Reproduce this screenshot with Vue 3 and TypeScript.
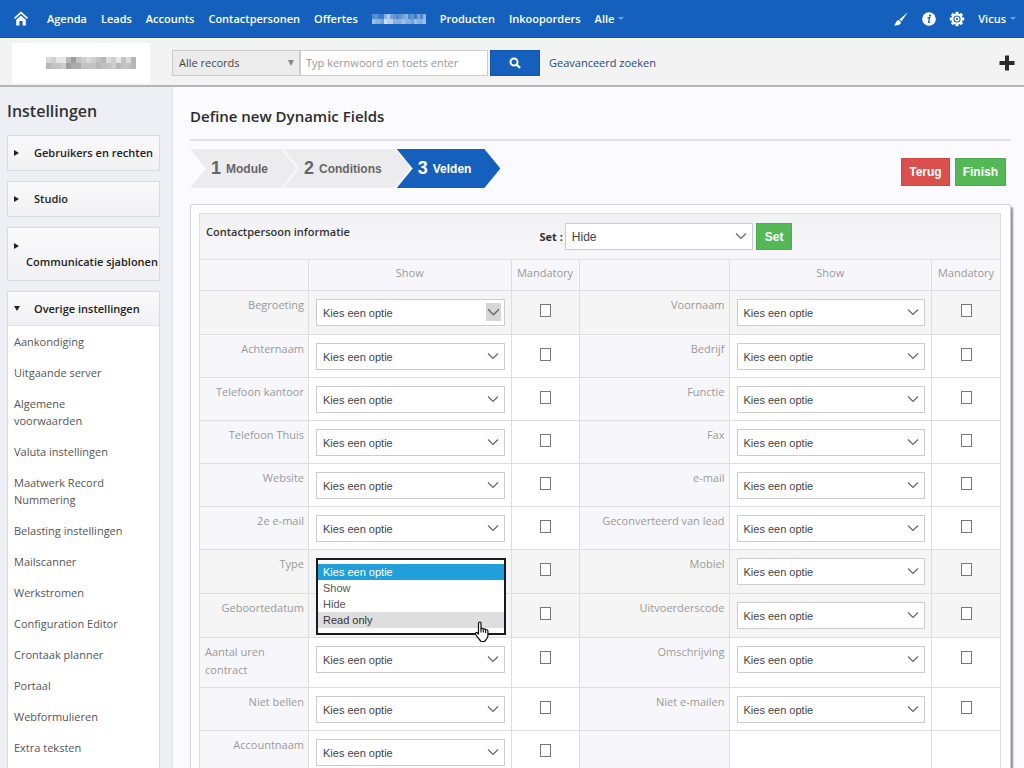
<script setup lang="ts">
import { ref } from 'vue'

interface Field {
  label: string
  focused?: boolean
  open?: boolean
}
interface Row {
  left: Field
  right?: Field
  shaded?: boolean
}

const modules: string[] = ['Agenda', 'Leads', 'Accounts', 'Contactpersonen', 'Offertes']
const moreModules: string[] = ['Producten', 'Inkooporders']

const closedGroups = ['Gebruikers en rechten', 'Studio', 'Communicatie sjablonen']
const settings: string[] = [
  'Aankondiging',
  'Uitgaande server',
  'Algemene voorwaarden',
  'Valuta instellingen',
  'Maatwerk Record Nummering',
  'Belasting instellingen',
  'Mailscanner',
  'Werkstromen',
  'Configuration Editor',
  'Crontaak planner',
  'Portaal',
  'Webformulieren',
  'Extra teksten',
]

const steps = [
  { n: 1, label: 'Module' },
  { n: 2, label: 'Conditions' },
  { n: 3, label: 'Velden' },
]
const currentStep = ref(3)

const options = ['Kies een optie', 'Show', 'Hide', 'Read only']

const rows: Row[] = [
  { left: { label: 'Begroeting', focused: true }, right: { label: 'Voornaam' }, shaded: true },
  { left: { label: 'Achternaam' }, right: { label: 'Bedrijf' } },
  { left: { label: 'Telefoon kantoor' }, right: { label: 'Functie' } },
  { left: { label: 'Telefoon Thuis' }, right: { label: 'Fax' } },
  { left: { label: 'Website' }, right: { label: 'e-mail' } },
  { left: { label: '2e e-mail' }, right: { label: 'Geconverteerd van lead' } },
  { left: { label: 'Type', open: true }, right: { label: 'Mobiel' }, shaded: true },
  { left: { label: 'Geboortedatum' }, right: { label: 'Uitvoerderscode' }, shaded: true },
  { left: { label: 'Aantal uren contract' }, right: { label: 'Omschrijving' } },
  { left: { label: 'Niet bellen' }, right: { label: 'Niet e-mailen' } },
  { left: { label: 'Accountnaam' } },
]

const fieldsOf = (row: Row): (Field | undefined)[] => [row.left, row.right]

const mosaic = [3, 4, 2, 2, 6, 8, 5, 4, 3, 4, 5, 6, 3, 4, 2, 5, 3, 6]
const mosaicLow = [6, 5, 5, 4, 8, 7, 7, 5, 5, 5, 6, 5, 5, 4, 6, 5, 5, 6]
</script>

<template>
  <div class="page">
    <nav class="topbar">
      <a href="#" class="home" aria-label="Home">
        <svg width="16" height="16" viewBox="0 0 16 16">
          <path d="M1.500 7.400 L8 1.600 L14.500 7.400" fill="none" stroke="#fff" stroke-width="1.600" />
          <path d="M3.200 8.800 L8 4.600 L12.800 8.800 V14.500 H9.600 V10 H6.400 V14.500 H3.200 Z" fill="#fff" />
        </svg>
      </a>
      <a v-for="m in modules" :key="m" href="#">{{ m }}</a>
      <svg class="masked" width="54" height="10" viewBox="0 0 54 10" shape-rendering="crispEdges">
        <rect v-for="(v, i) in mosaic" :key="i" :x="i * 3" y="0" width="3" height="5" fill="#fff" :opacity="v / 12" />
        <rect v-for="(v, i) in mosaicLow" :key="'l' + i" :x="i * 3" y="5" width="3" height="5" fill="#fff" :opacity="v / 10" />
      </svg>
      <a v-for="m in moreModules" :key="m" href="#">{{ m }}</a>
      <a href="#" class="drop">Alle <i class="caret"></i></a>
      <div class="tools">
        <a href="#" aria-label="Opmaak">
          <svg width="16" height="16" viewBox="0 0 16 16">
            <path d="M15 1 L8.500 10.200 L6.400 8.400 Z" fill="#fff" />
            <path d="M5.600 9 L8 11.200 C7.600 14 4.500 14.800 1 14.400 C2.800 13.400 2.600 9.800 5.600 9 Z" fill="#fff" />
          </svg>
        </a>
        <a href="#" aria-label="Informatie">
          <svg width="14" height="14" viewBox="0 0 14 14">
            <circle cx="7" cy="7" r="6.800" fill="#fff" />
            <circle cx="8" cy="3.600" r="1.100" fill="#1560bd" />
            <path d="M5.400 6.200 L7.700 5.600 L6.600 10 Q6.500 10.800 8.200 10" fill="none" stroke="#1560bd" stroke-width="1.300" />
          </svg>
        </a>
        <a href="#" aria-label="Instellingen">
          <svg width="16" height="16" viewBox="0 0 16 16">
            <g fill="#fff">
              <rect v-for="a in [0, 45, 90, 135]" :key="a" x="6.500" y="0.800" width="3" height="14.400" :transform="`rotate(${a} 8 8)`" />
            </g>
            <circle cx="8" cy="8" r="4.600" fill="#1560bd" stroke="#fff" stroke-width="2" />
            <circle cx="8" cy="8" r="1.800" fill="none" stroke="#fff" stroke-width="1.400" />
          </svg>
        </a>
        <a href="#" class="drop">Vicus <i class="caret"></i></a>
      </div>
    </nav>

    <header class="searchbar">
      <div class="logo">
        <svg width="90" height="12" viewBox="0 0 90 12" shape-rendering="crispEdges">
          <rect v-for="(v, i) in mosaic" :key="i" :x="i * 5" y="0" width="5" height="6" fill="#555" :opacity="v / 14" />
          <rect v-for="(v, i) in mosaicLow" :key="'l' + i" :x="i * 5" y="6" width="5" height="6" fill="#555" :opacity="v / 14" />
        </svg>
      </div>
      <form class="search" @submit.prevent>
        <span class="pick scope">
          <select aria-label="Zoekbereik"><option>Alle records</option></select>
          <svg class="tri" width="6" height="6" viewBox="0 0 6 6"><path d="M0 0 H6 L3 6 Z" fill="#888" /></svg>
        </span>
        <input type="text" class="term" aria-label="Zoekterm" placeholder="Typ kernwoord en toets enter" />
        <button type="submit" class="go" aria-label="Zoeken">
          <svg width="12" height="12" viewBox="0 0 12 12">
            <circle cx="5" cy="5" r="3.500" fill="none" stroke="#fff" stroke-width="2" />
            <path d="M7.500 7.500 L11 11" stroke="#fff" stroke-width="2.400" />
          </svg>
        </button>
      </form>
      <a href="#" class="advanced">Geavanceerd zoeken</a>
      <button type="button" class="add" aria-label="Toevoegen">
        <svg width="16" height="16" viewBox="0 0 16 16"><path d="M8 0.500 V15.500 M0.500 8 H15.500" stroke="#2b2b2f" stroke-width="4" /></svg>
      </button>
    </header>

    <div class="body">
      <aside class="side">
        <h2>Instellingen</h2>
        <div v-for="g in closedGroups" :key="g" class="group">
          <button type="button" class="group-head" :class="{ tall: g.startsWith('Comm') }" aria-expanded="false">
            <span class="arrow right"></span><span class="name">{{ g }}</span>
          </button>
        </div>
        <div class="group">
          <button type="button" class="group-head open" aria-expanded="true">
            <span class="arrow down"></span><span class="name">Overige instellingen</span>
          </button>
          <ul class="links">
            <li v-for="s in settings" :key="s"><a href="#">{{ s }}</a></li>
          </ul>
        </div>
      </aside>

      <main class="main">
        <h1>Define new Dynamic Fields</h1>
        <div class="toolbar">
          <ol class="steps">
            <li v-for="s in steps" :key="s.n" :class="{ active: s.n === currentStep }">
              <b>{{ s.n }}</b><span>{{ s.label }}</span>
            </li>
          </ol>
          <div class="actions">
            <button type="button" class="btn red">Terug</button>
            <button type="button" class="btn green">Finish</button>
          </div>
        </div>

        <section class="panel">
          <div class="block">
            <div class="block-head">
              <h3>Contactpersoon informatie</h3>
              <div class="bulk">
                <label for="bulk">Set :</label>
                <span class="pick">
                  <select id="bulk"><option>Hide</option></select>
                  <svg class="chev" width="12" height="8" viewBox="0 0 12 8"><path d="M1 1.500 L6 6.500 L11 1.500" /></svg>
                </span>
                <button type="button" class="btn green small">Set</button>
              </div>
            </div>
            <table>
              <colgroup>
                <col class="c-label" /><col /><col class="c-check" />
                <col class="c-label2" /><col /><col class="c-check" />
              </colgroup>
              <thead>
                <tr>
                  <th></th><th>Show</th><th>Mandatory</th>
                  <th></th><th>Show</th><th>Mandatory</th>
                </tr>
              </thead>
              <tbody>
                <tr v-for="(row, r) in rows" :key="r" :class="{ shaded: row.shaded }">
                  <template v-for="(f, c) in fieldsOf(row)" :key="c">
                    <td class="label">
                      <label v-if="f" :for="`f${r}-${c}`">{{ f.label }}</label>
                    </td>
                    <td class="show">
                      <span v-if="f" class="pick" :class="{ focused: f.focused }">
                        <select :id="`f${r}-${c}`">
                          <option v-for="o in options" :key="o">{{ o }}</option>
                        </select>
                        <svg class="chev" width="12" height="8" viewBox="0 0 12 8"><path d="M1 1.500 L6 6.500 L11 1.500" /></svg>
                        <span v-if="f.open" class="menu">
                          <ul role="listbox" aria-label="Type">
                            <li
                              v-for="(o, i) in options"
                              :key="o"
                              role="option"
                              :aria-selected="i === 0"
                              :class="{ chosen: i === 0, hover: i === 3 }"
                            >{{ o }}</li>
                          </ul>
                          <svg class="hand" width="16" height="22" viewBox="0 0 16 22">
                            <path
                              d="M4.500 13 V2.500 C4.500 0.600 7 0.600 7 2.500 V8 C7.300 6.800 9.200 7 9.300 8.400 C9.800 7.400 11.500 7.700 11.600 9 C12.200 8.300 13.900 8.600 13.900 10.200 V15 C13.900 17 12.500 18.200 10.500 20.500 H7 C5.800 18.500 3.200 16.500 1.600 13.300 C0.800 11.800 2.400 10.800 3.500 12 Z"
                              fill="#fff" stroke="#111" stroke-width="1.200" stroke-linejoin="round"
                            />
                            <path d="M7 8 V11.500 M9.300 8.400 V11.500 M11.600 9 V12" stroke="#111" stroke-width="1.100" fill="none" />
                          </svg>
                        </span>
                      </span>
                    </td>
                    <td class="check">
                      <input v-if="f" type="checkbox" :aria-label="`${f.label} verplicht`" />
                    </td>
                  </template>
                </tr>
              </tbody>
            </table>
          </div>
        </section>
      </main>
    </div>
  </div>
</template>

<style>
body {
  margin: 0;
  background: #fafaff;
}
</style>

<style scoped>
* {
  box-sizing: border-box;
}
.page {
  height: 100vh;
  overflow: hidden;
  display: flex;
  flex-direction: column;
  font-family: 'Open Sans', 'Noto Sans', sans-serif;
  font-size: 11px;
  color: #333;
}
a {
  text-decoration: none;
  color: inherit;
}
ul,
ol {
  list-style: none;
  margin: 0;
  padding: 0;
}
button {
  font-family: inherit;
  cursor: pointer;
}

.topbar {
  flex: none;
  height: 38px;
  padding: 0 8px 0 13px;
  display: flex;
  align-items: center;
  gap: 14px;
  background: #1560bd;
  border-bottom: 1px solid #0f55ae;
  color: #fff;
  font-weight: 600;
  white-space: nowrap;
}
.topbar svg {
  display: block;
}
.home {
  margin-right: 4px;
}
.drop {
  display: flex;
  align-items: center;
  gap: 4px;
}
.caret {
  border: 3px solid transparent;
  border-top-color: #6a9fe0;
  border-bottom: 0;
}
.tools {
  margin-left: auto;
  display: flex;
  align-items: center;
  gap: 13px;
}

.searchbar {
  flex: none;
  height: 49px;
  padding: 2px 9px 0 12px;
  display: flex;
  align-items: center;
  background: #f3f3f3;
  border-bottom: 2px solid #b4b4b9;
}
.logo {
  width: 138px;
  height: 40px;
  margin-right: 22px;
  padding-right: 14px;
  display: flex;
  align-items: center;
  justify-content: flex-end;
  background: #fff;
}
.search {
  display: flex;
}
.scope {
  width: 128px;
}
.term {
  width: 188px;
  height: 26px;
  padding: 0 5px;
  border: 1px solid #ccc;
  background: #fff;
  font-family: inherit;
  font-size: 11px;
}
.term::placeholder {
  color: #999;
}
.go {
  width: 50px;
  height: 26px;
  margin-left: 2px;
  padding: 0;
  display: flex;
  align-items: center;
  justify-content: center;
  border: 1px solid #1257ad;
  background: #1560bd;
}
.advanced {
  margin-left: 9px;
  color: #2a4a70;
}
.add {
  margin-left: auto;
  padding: 0;
  border: 0;
  background: none;
}
.add svg {
  display: block;
}

.body {
  flex: 1;
  min-height: 0;
  display: flex;
}
.side {
  flex: none;
  width: 173px;
  padding: 13px 12px 0 7px;
  background: #eeeff4;
  border-right: 1px solid #e2e3ea;
}
h2 {
  margin: 0 0 13px;
  font-size: 16px;
  line-height: 22px;
  font-weight: 600;
  color: #333;
}
.group {
  margin-bottom: 10px;
  border: 1px solid #d9dadf;
  background: #fff;
}
.group-head {
  width: 100%;
  min-height: 34px;
  padding: 0 6px;
  display: flex;
  align-items: center;
  border: 0;
  background: linear-gradient(#fafafc, #f1f1f3);
  font-size: 11px;
  line-height: 16px;
  font-weight: 600;
  color: #222;
  text-align: left;
  white-space: nowrap;
}
.group-head.open {
  border-bottom: 1px solid #e3e3e8;
}
.group-head .name {
  margin-left: 12px;
}
.group-head.tall {
  padding: 10px 6px;
  flex-direction: column;
  align-items: flex-start;
}
.arrow {
  width: 8px;
  height: 6px;
}
.tall .arrow {
  height: 16px;
}
.arrow::before {
  content: '';
  display: block;
  width: 0;
  border: 3px solid transparent;
}
.right::before {
  border-left: 5px solid #222;
  border-right: 0;
}
.tall .right::before {
  margin-top: 5px;
}
.down::before {
  border-top: 5px solid #222;
  border-bottom: 0;
}
.links {
  padding-bottom: 12px;
}
.links a {
  display: block;
  padding: 7px 32px 7px 6px;
  line-height: 17px;
  color: #555;
}

.main {
  flex: 1;
  min-width: 0;
  padding: 17px 13px 0 17px;
}
h1 {
  margin: 0;
  padding-bottom: 10px;
  font-size: 15px;
  line-height: 25px;
  font-weight: 600;
  color: #2d2d2d;
  border-bottom: 2px solid #e2e2e8;
}
.toolbar {
  display: flex;
  justify-content: space-between;
  align-items: flex-start;
  padding: 8px 5px 16px 0;
}
.steps {
  display: flex;
}
.steps li {
  height: 39px;
  padding: 0 29px 0 21px;
  margin-right: -14px;
  display: flex;
  align-items: center;
  gap: 5px;
  clip-path: polygon(0 0, calc(100% - 16px) 0, 100% 50%, calc(100% - 16px) 100%, 0 100%, 16px 50%);
  background: #ececee;
  color: #666;
  font-family: 'Liberation Sans', Arial, sans-serif;
  font-size: 12px;
  font-weight: 700;
}
.steps b {
  font-size: 18px;
}
.steps .active {
  background: #1560bd;
  color: #fff;
}
.actions {
  display: flex;
  gap: 5px;
  margin-top: 9px;
}
.btn {
  height: 28px;
  padding: 0 7px;
  border: 1px solid;
  font-family: 'Liberation Sans', Arial, sans-serif;
  font-size: 12px;
  font-weight: 700;
  color: #fff;
}
.red {
  background: #d9504d;
  border-color: #cf4642;
}
.green {
  background: #54b857;
  border-color: #4bad4f;
}
.small {
  height: 27px;
  margin-left: 3px;
  padding: 0 8px;
}

.panel {
  padding: 8px 9px 40px 8px;
  background: #fff;
  border: 1px solid #cfcfd4;
  border-radius: 2px;
  box-shadow: 2px 3px 2px #8e8e94;
}
.block {
  border: 1px solid #dcdce1;
}
.block-head {
  display: flex;
  height: 45px;
  padding-left: 6px;
  background: linear-gradient(#f2f2f5, #f7f7fa);
}
h3 {
  width: 42%;
  margin: 0;
  padding-top: 9px;
  font-size: 11px;
  line-height: 18px;
  font-weight: 600;
  color: #333;
}
.bulk {
  display: flex;
  align-items: center;
  font-weight: 700;
}
.bulk .pick {
  width: 188px;
  margin-left: 2px;
}

.pick {
  position: relative;
  display: block;
}
.pick select {
  display: block;
  width: 100%;
  height: 27px;
  padding: 0 6px;
  border: 1px solid #ccc;
  border-radius: 0;
  appearance: none;
  background: #fff;
  font-family: 'Liberation Sans', Arial, sans-serif;
  font-size: 12px;
  color: #444;
}
.scope select {
  height: 26px;
  background: #ececec;
  font-family: inherit;
  font-size: 11px;
}
.tri {
  position: absolute;
  right: 6px;
  top: 10px;
  pointer-events: none;
}
td .pick select {
  font-size: 11px;
}
.chev {
  position: absolute;
  right: 6px;
  top: 9px;
  pointer-events: none;
}
.chev path {
  fill: none;
  stroke: #666;
  stroke-width: 1.200;
}
.focused .chev {
  right: 4px;
  top: 4px;
  width: 15px;
  height: 18px;
  padding: 0 1px;
  background: #d6d6d6;
}

table {
  width: 100%;
  table-layout: fixed;
  border-collapse: separate;
  border-spacing: 0;
}
.c-label {
  width: 109px;
}
.c-label2 {
  width: 150px;
}
.c-check {
  width: 68px;
}
th,
td {
  padding: 0;
  border-right: 1px solid #dddde2;
  border-bottom: 1px solid #dddde2;
  vertical-align: top;
}
th:last-child,
td:last-child {
  border-right: 0;
}
th {
  height: 32px;
  padding-top: 4px;
  border-top: 1px solid #dddde2;
  line-height: 18px;
  background: #f7f7fb;
  font-weight: 400;
  color: #999;
}
td {
  height: 43px;
}
td.label {
  padding: 5px 4px 8px 5px;
  background: #f7f7fb;
  line-height: 18px;
  color: #999;
}
td.label label {
  display: block;
  width: fit-content;
  margin-left: auto;
}
.shaded td {
  height: 44px;
}
.shaded td,
.shaded td.label {
  background: #f5f5f5;
}
td.show {
  padding: 8px 6px 7px 7px;
}
td.check {
  padding-top: 13px;
}
td input {
  display: block;
  width: 11px;
  height: 13px;
  margin: 0 auto;
  appearance: none;
  border: 1px solid #777;
  background: #fff;
}

.menu {
  position: absolute;
  z-index: 2;
  top: 0;
  left: 0;
  right: -1px;
  padding: 4px 0 5px;
  border: 2px solid #181a1f;
  background: #fff;
  font-family: 'Liberation Sans', Arial, sans-serif;
  font-size: 11px;
  color: #555;
}
.menu li {
  padding: 0 5px;
  line-height: 16px;
}
.menu .chosen {
  background: #209fdb;
  color: #fff;
}
.menu .hover {
  background: #dedede;
  color: #333;
}
.hand {
  position: absolute;
  right: 14px;
  bottom: -10px;
}
</style>
